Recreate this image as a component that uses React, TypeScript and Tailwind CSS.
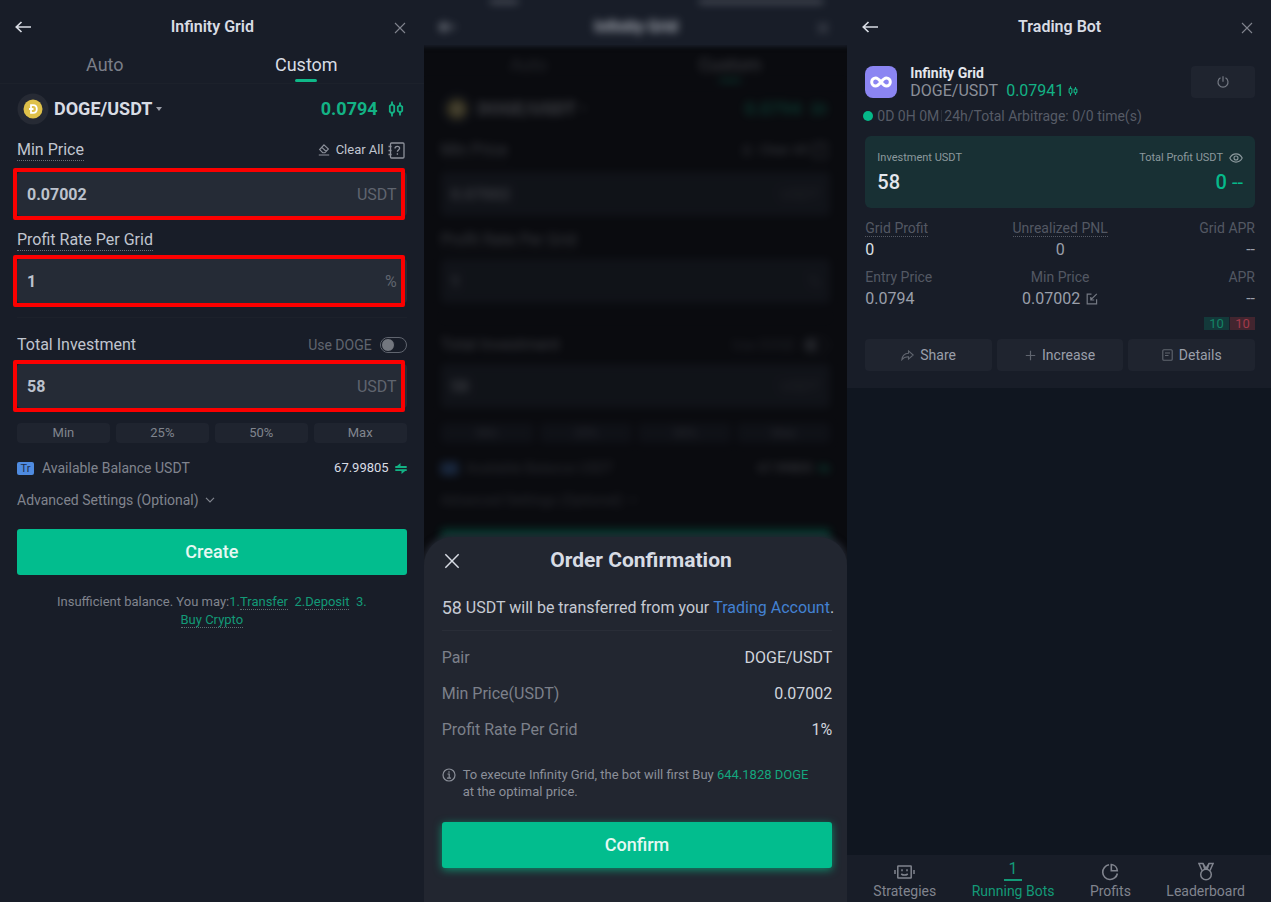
import React, { useId } from 'react';

type IconProps = { className?: string };

const BackIcon = ({ className }: IconProps) => (
  <svg className={className} viewBox="0 0 16 12" fill="none" stroke="currentColor" strokeWidth="1.7">
    <path d="M6.5 1 1.3 6l5.2 5M1.5 6H16" />
  </svg>
);

const CloseIcon = ({ className }: IconProps) => (
  <svg className={className} viewBox="0 0 12 12" fill="none" stroke="currentColor" strokeWidth="1.1">
    <path d="M1 1l10 10M11 1 1 11" />
  </svg>
);

const CandlesIcon = ({ className }: IconProps) => (
  <svg className={className} viewBox="0 0 16 16" fill="none" stroke="currentColor" strokeWidth="1.8">
    <path d="M4 .5V4M4 12v3.500M12 1.500V5M12 11v3.500" />
    <path d="M4 3.300 6.200 5v5.500L4 12.500l-2.200-2V5zM12 4.300l2.200 1.500v4L12 11.500 9.800 9.800v-4z" />
  </svg>
);

const DogeIcon = ({ className }: IconProps) => (
  <svg className={className} viewBox="0 0 32 32">
    <circle cx="16" cy="16" r="15.500" fill="#262a34" />
    <circle cx="16" cy="16" r="9.500" fill="#dfc14a" />
    <path
      d="M14 12.200h2.200c2.200 0 3.600 1.500 3.600 3.800s-1.400 3.800-3.600 3.800H14zM12 16h4.500"
      fill="none"
      stroke="#fff"
      strokeWidth="1.800"
    />
  </svg>
);

const EraserIcon = ({ className }: IconProps) => (
  <svg className={className} viewBox="0 0 12 12" fill="none" stroke="currentColor" strokeWidth="1.100">
    <path d="M6 .8 10.400 5 6.900 8.700H4.700L1.600 5.500zM3.600 3.200l4.600 4.300M.8 11h10.400" />
  </svg>
);

const GuideIcon = ({ className }: IconProps) => (
  <svg className={className} viewBox="0 0 17 17" fill="none" stroke="currentColor" strokeWidth="1.300">
    <rect x="2.500" y="1" width="13.500" height="15" rx="1" />
    <path d="M.5 4.500h3M.5 8.500h3M.5 12.500h3" />
    <path d="M7 6.500c0-1.300 1-2.200 2.300-2.200s2.300.8 2.300 2c0 1.600-2.200 1.700-2.200 3.400M9.400 11.300v1.500" />
  </svg>
);

const TransferIcon = ({ className }: IconProps) => (
  <svg className={className} viewBox="0 0 12 11" fill="none" stroke="currentColor" strokeWidth="1.800">
    <path d="M.3 4h11.400M.3 7.200h11.400" />
    <path d="M5.500 0v4.500L.3 4.500zM6.500 11V6.700h5.200z" fill="currentColor" stroke="none" />
  </svg>
);

const ChevronIcon = ({ className }: IconProps) => (
  <svg className={className} viewBox="0 0 10 6" fill="none" stroke="currentColor" strokeWidth="1.200">
    <path d="M1 .8 5 4.800 9 .8" />
  </svg>
);

const InfoIcon = ({ className }: IconProps) => (
  <svg className={className} viewBox="0 0 14 14" fill="none" stroke="currentColor" strokeWidth="1.200">
    <circle cx="7" cy="7" r="6" />
    <path d="M5.500 6H7.200v4M5 10.200h4M7 3.300v1.400" />
  </svg>
);

const InfinityIcon = ({ className }: IconProps) => (
  <svg className={className} viewBox="0 0 22 12" fill="none" stroke="currentColor" strokeWidth="3">
    <path d="M11 6C9 3.500 7.800 2 5.700 2a4 4 0 0 0 0 8C7.800 10 9 8.500 11 6s3.200-4 5.300-4a4 4 0 0 1 0 8C14.200 10 13 8.500 11 6z" />
  </svg>
);

const PowerIcon = ({ className }: IconProps) => (
  <svg className={className} viewBox="0 0 12 12" fill="none" stroke="currentColor" strokeWidth="1.200">
    <path d="M3.500 1.800a5 5 0 1 0 5 0M6 .3v5.500" />
  </svg>
);

const EyeIcon = ({ className }: IconProps) => (
  <svg className={className} viewBox="0 0 14 10" fill="none" stroke="currentColor" strokeWidth="1.100">
    <path d="M.8 5C2.200 2.300 4.300.9 7 .9S11.800 2.300 13.200 5C11.800 7.700 9.700 9.100 7 9.100S2.200 7.700.8 5z" />
    <circle cx="7" cy="5" r="2" />
  </svg>
);

const EditIcon = ({ className }: IconProps) => (
  <svg className={className} viewBox="0 0 12 12" fill="none" stroke="currentColor" strokeWidth="1.200">
    <path d="M5.500 1.200H1.200v9.600h9.400V6.300M10.800.8 5 6.600M4.800 4v3h3.400" />
  </svg>
);

const ShareIcon = ({ className }: IconProps) => (
  <svg className={className} viewBox="0 0 13 11" fill="none" stroke="currentColor" strokeWidth="1.100">
    <path d="M7.500.9 12.200 5 7.500 9.100V6.700C4.500 6.600 2.500 7.500.9 9.600 1.200 6.300 3.500 3.600 7.500 3.300z" />
  </svg>
);

const PlusIcon = ({ className }: IconProps) => (
  <svg className={className} viewBox="0 0 11 11" fill="none" stroke="currentColor" strokeWidth="1.200">
    <path d="M5.500.8v9.400M.8 5.500h9.400" />
  </svg>
);

const DetailsIcon = ({ className }: IconProps) => (
  <svg className={className} viewBox="0 0 11 12" fill="none" stroke="currentColor" strokeWidth="1.100">
    <rect x=".8" y=".8" width="9.400" height="10.400" rx="1" />
    <path d="M3 4h5M3 6.500h3.500" />
  </svg>
);

const RobotIcon = ({ className }: IconProps) => (
  <svg className={className} viewBox="0 0 21 14" fill="none" stroke="currentColor" strokeWidth="1.500">
    <rect x="3.800" y="1" width="13.400" height="12" rx=".5" />
    <path d="M1 5v4M20 5v4M8 4.300v2M13 4.300v2M7.200 9c2 1.300 4.600 1.300 6.600 0" />
  </svg>
);

const PieIcon = ({ className }: IconProps) => (
  <svg className={className} viewBox="0 0 18 18" fill="none" stroke="currentColor" strokeWidth="1.600">
    <path d="M8 1.800a7.400 7.400 0 1 0 8.400 8.700" />
    <path d="M10.300 1.500a6.500 6.500 0 0 1 6 6.200h-6z" />
  </svg>
);

const MedalIcon = ({ className }: IconProps) => (
  <svg className={className} viewBox="0 0 16 19" fill="none" stroke="currentColor" strokeWidth="1.500">
    <circle cx="8" cy="12.500" r="5.300" />
    <path d="M4 8.500.9 1.500h4L8 6.500l3.100-5h4l-3.100 7M5 1.500l1.800 5.500M11 1.500 9.200 7" />
  </svg>
);

const PanelHeader = ({ title }: { title: string }) => (
  <header className="flex h-[45px] items-center justify-between pt-2 pr-[18px] pl-[15px]">
    <button type="button" aria-label="Back" className="text-[#d8dce4]">
      <BackIcon className="h-3 w-4" />
    </button>
    <h1 className="text-base font-semibold text-[#d8dce4]">{title}</h1>
    <button type="button" aria-label="Close" className="pt-0.5 text-[#80848e]">
      <CloseIcon className="h-3 w-3" />
    </button>
  </header>
);

type FieldProps = {
  id: string;
  value: string;
  unit: string;
  highlighted: boolean;
};

const Field = ({ id, value, unit, highlighted }: FieldProps) => (
  <div className="relative flex h-11 items-center rounded bg-[#252b36] px-2.5 pt-0.5">
    <input
      id={id}
      type="text"
      defaultValue={value}
      className="min-w-0 flex-1 bg-transparent text-base font-bold text-[#bcc2cd] outline-none"
    />
    <span className="text-base text-[#60656f]">{unit}</span>
    {highlighted && (
      <span className="pointer-events-none absolute -inset-y-1 -left-1 right-0.5 rounded-xs border-4 border-[#fb0000]" />
    )}
  </div>
);

type GridFormProps = {
  highlighted?: boolean;
  covered?: boolean;
};

const GridForm = ({ highlighted = false, covered = false }: GridFormProps) => {
  const id = useId();

  return (
    <form onSubmit={(e) => e.preventDefault()}>
      <div className="flex h-[39px] items-end justify-between border-b border-[#1c212b] px-[86px] text-lg leading-7">
        <button type="button" className="pb-1 text-[#7b7f89]">
          Auto
        </button>
        <button type="button" className="flex flex-col items-center text-[#d8dce4]">
          Custom
          <span className="mb-px h-[3px] w-[22px] rounded bg-[#0fb888]" />
        </button>
      </div>

      <div className="px-[17px]">
        <div className="flex h-[50px] items-center justify-between">
          <button type="button" className="flex items-center text-lg font-bold text-[#d8dce4]">
            <DogeIcon className="mr-[5px] h-8 w-8" />
            DOGE/USDT
            <svg className="ml-1 h-1 w-1.5" viewBox="0 0 6 4" fill="#9a9ea8">
              <path d="M0 0h6L3 4z" />
            </svg>
          </button>
          <div className="flex items-center gap-2.5 pr-[3px] text-lg font-bold text-[#13b285]">
            0.0794
            <CandlesIcon className="h-4 w-4" />
          </div>
        </div>

        <div className="mb-1.5 flex h-8 items-center justify-between">
          <label htmlFor={`${id}-min`} className="border-b border-dotted border-[#6b6f79] text-base leading-5 text-[#c0c5cf]">
            Min Price
          </label>
          <div className="flex items-center gap-1 pr-0.5 text-[#8d919b]">
            <button type="button" className="flex items-center gap-1.5 text-[13px] text-[#c0c5cf]">
              <EraserIcon className="h-3 w-3 text-[#8d919b]" />
              Clear All
            </button>
            <GuideIcon className="h-[17px] w-[17px]" />
          </div>
        </div>
        <Field id={`${id}-min`} value="0.07002" unit="USDT" highlighted={highlighted} />

        <div className="mt-2 mb-[3px] flex h-8 items-center">
          <label htmlFor={`${id}-rate`} className="border-b border-dotted border-[#6b6f79] text-base leading-5 text-[#c0c5cf]">
            Profit Rate Per Grid
          </label>
        </div>
        <Field id={`${id}-rate`} value="1" unit="%" highlighted={highlighted} />

        <hr className="mt-3.5 border-[#1c212b]" />

        <div className="mt-[11px] mb-[3px] flex h-8 items-center justify-between">
          <label htmlFor={`${id}-total`} className="text-base text-[#c0c5cf]">
            Total Investment
          </label>
          <label className="flex items-center gap-2 text-sm text-[#60656f]">
            Use DOGE
            <input
              type="checkbox"
              className="h-4 w-[27px] appearance-none rounded-full border border-[#60656f] before:block before:h-3.5 before:w-3.5 before:rounded-full before:border before:border-[#181d28] before:bg-[#73777f]"
            />
          </label>
        </div>
        <Field id={`${id}-total`} value="58" unit="USDT" highlighted={highlighted} />

        <div className="mt-[15px] grid grid-cols-4 gap-1.5">
          {['Min', '25%', '50%', 'Max'].map((amount) => (
            <button key={amount} type="button" className="h-5 rounded bg-[#1f242f] text-[13px] leading-5 text-[#80848e]">
              {amount}
            </button>
          ))}
        </div>

        <div className="mt-[13px] flex h-6 items-center justify-between text-[13px]">
          <div className="flex items-center gap-2 text-sm text-[#80848e]">
            <span className="h-[13px] w-[17px] rounded-xs bg-[#4f8be0] text-center text-[11px] leading-[13px] text-[#1c2b48]">Tr</span>
            Available Balance USDT
          </div>
          <div className="flex items-center gap-1.5 text-[#d8dce4]">
            67.99805
            <TransferIcon className="h-[11px] w-3 text-[#13b285]" />
          </div>
        </div>

        <button type="button" className="mt-2 flex h-6 items-center gap-1.5 text-sm text-[#80848e]">
          Advanced Settings (Optional)
          <ChevronIcon className="h-1.5 w-2.5" />
        </button>

        <button
          type="submit"
          aria-label="Create"
          className="mt-[17px] h-[46px] w-full rounded-[3px] bg-[#02bd8e] text-lg font-medium text-[#e6f8f3]"
        >
          {!covered && 'Create'}
        </button>

        {!covered && (
          <p className="mt-[18px] text-center text-[13px] leading-[18px] text-[#80848e]">
            Insufficient balance. You may:
            <span className="text-[#139a77]">
              1.<a href="#transfer" className="border-b border-dotted border-[#5d6e70]">Transfer</a>
              &nbsp; 2.<a href="#deposit" className="border-b border-dotted border-[#5d6e70]">Deposit</a>
              &nbsp; 3.
              <br />
              <a href="#buy" className="border-b border-dotted border-[#5d6e70]">Buy Crypto</a>
            </span>
          </p>
        )}
      </div>
    </form>
  );
};

const orderRows = [
  { label: 'Pair', value: 'DOGE/USDT' },
  { label: 'Min Price(USDT)', value: '0.07002' },
  { label: 'Profit Rate Per Grid', value: '1%' },
];

const OrderConfirmation = () => (
  <div
    role="dialog"
    aria-label="Order Confirmation"
    className="absolute inset-x-0 bottom-0 rounded-t-[28px] bg-[#222630] pr-[15px] pb-[34px] pl-[18px] shadow-[0_0_6px_2px_#222630]"
  >
    <div className="flex h-12 items-center">
      <button type="button" aria-label="Close" className="w-5 text-[#d8dce4]">
        <CloseIcon className="ml-0.5 h-4 w-4" />
      </button>
      <h2 className="flex-1 pr-3 text-center text-[21px] font-bold text-[#d8dce4]">Order Confirmation</h2>
    </div>
    <p className="flex h-[46px] items-center border-b border-[#292d37] text-base whitespace-pre text-[#c6cad3]">
      <span className="text-lg">58</span> USDT will be transferred from your <a href="#account" className="text-[#4381d2]">Trading Account</a>.
    </p>
    <dl className="pt-[9px] text-base">
      {orderRows.map((row) => (
        <div key={row.label} className="flex h-9 items-center justify-between">
          <dt className="text-[#7c808a]">{row.label}</dt>
          <dd className="text-[#d0d4dc]">{row.value}</dd>
        </div>
      ))}
    </dl>
    <div className="mt-[18px] flex gap-[7px] text-[13px] leading-[17px] text-[#8b8f99]">
      <InfoIcon className="mt-0.5 h-3.5 w-3.5 shrink-0" />
      <p>
        To execute Infinity Grid, the bot will first Buy <span className="text-[#14a67e]">644.1828 DOGE</span>
        <br />
        at the optimal price.
      </p>
    </div>
    <button
      type="button"
      className="mt-[22px] h-[46px] w-full rounded-[3px] bg-[#02bd8e] text-lg font-medium text-[#e6f8f3] shadow-[0_2px_8px_#118b6c]"
    >
      Confirm
    </button>
  </div>
);

type StatProps = {
  label: string;
  dotted?: boolean;
  children: React.ReactNode;
};

const Stat = ({ label, dotted, children }: StatProps) => (
  <div>
    <dt className="h-5 text-sm leading-5 text-[#535863]">
      <span className={dotted ? 'border-b border-dotted border-[#535863]' : ''}>{label}</span>
    </dt>
    <dd className="h-6 text-base leading-6 text-[#9a9faa]">{children}</dd>
  </div>
);

const BotCard = () => (
  <article className="bg-[#181d28] pt-[21px] pr-4 pb-[17px] pl-[18px]">
    <div className="flex h-8 items-center">
      <span className="flex h-8 w-8 items-center justify-center rounded-lg bg-[#8b85f2] text-white">
        <InfinityIcon className="h-3 w-[22px]" />
      </span>
      <div className="ml-[13px] flex-1">
        <h2 className="text-sm leading-[18px] font-bold text-[#e4e7ed]">Infinity Grid</h2>
        <div className="flex items-center gap-2 text-base leading-[18px] text-[#8b8f99]">
          DOGE/USDT
          <span className="flex items-center gap-1 text-[#13b285]">
            0.07941
            <CandlesIcon className="h-2.5 w-2.5" />
          </span>
        </div>
      </div>
      <button type="button" aria-label="Stop bot" className="flex h-8 w-16 items-center justify-center rounded bg-[#1f242f] text-[#747983]">
        <PowerIcon className="h-3 w-3" />
      </button>
    </div>

    <div className="mt-2 flex h-5 items-center text-sm text-[#565b66]">
      <span className="-ml-0.5 mr-1 h-2.5 w-2.5 rounded-full bg-[#05b889]" />
      0D 0H 0M
      <span className="mx-0.5 h-3 w-px bg-[#2b303b]" />
      24h/Total Arbitrage: 0/0 time(s)
    </div>

    <div className="mt-2.5 flex h-[72px] justify-between rounded-md bg-[#183034] px-3 pt-3.5">
      <div>
        <div className="mb-1 text-[11px] leading-4 text-[#8c999d]">Investment USDT</div>
        <div className="text-xl leading-6 font-medium text-[#e4e7ed]">58</div>
      </div>
      <div className="text-right">
        <div className="mb-1 flex items-center gap-1.5 text-[11px] leading-4 text-[#8c999d]">
          Total Profit USDT
          <EyeIcon className="h-2.5 w-3.5" />
        </div>
        <div className="text-xl leading-6 font-medium text-[#06b98a]">
          0 <span className="font-normal">--</span>
        </div>
      </div>
    </div>

    <dl className="mt-2.5 grid grid-cols-3 gap-y-[5px]">
      <Stat label="Grid Profit" dotted>
        <span className="text-[#dde0e6]">0</span>
      </Stat>
      <div className="text-center">
        <Stat label="Unrealized PNL" dotted>0</Stat>
      </div>
      <div className="text-right">
        <Stat label="Grid APR">--</Stat>
      </div>
      <Stat label="Entry Price">0.0794</Stat>
      <div className="text-center">
        <Stat label="Min Price">
          <span className="inline-flex items-center gap-1.5">
            0.07002
            <EditIcon className="h-3 w-3 text-[#747983]" />
          </span>
        </Stat>
      </div>
      <div className="text-right">
        <Stat label="APR">--</Stat>
      </div>
    </dl>

    <div className="mt-1.5 flex h-[13px] justify-end gap-px text-center text-[13px] leading-[13px]">
      <span className="w-[25px] bg-[#13393a] text-[#138465]">10</span>
      <span className="w-[25px] bg-[#42252f] text-[#a3394a]">10</span>
    </div>

    <div className="mt-[9px] grid grid-cols-3 gap-[5px] text-sm text-[#9a9faa]">
      <button type="button" className="flex h-8 items-center justify-center gap-1.5 rounded bg-[#1f242f]">
        <ShareIcon className="h-[11px] w-[13px] text-[#60656f]" />
        Share
      </button>
      <button type="button" className="flex h-8 items-center justify-center gap-1.5 rounded bg-[#1f242f]">
        <PlusIcon className="h-[11px] w-[11px] text-[#60656f]" />
        Increase
      </button>
      <button type="button" className="flex h-8 items-center justify-center gap-1.5 rounded bg-[#1f242f]">
        <DetailsIcon className="h-3 w-[11px] text-[#60656f]" />
        Details
      </button>
    </div>
  </article>
);

const BottomNav = () => (
  <nav className="mt-auto flex h-[47px] justify-between bg-[#181d28] px-[26px] text-sm text-[#80848e]">
    <a href="#strategies" className="flex flex-col items-center">
      <span className="flex h-[26px] items-end pb-0.5">
        <RobotIcon className="h-3.5 w-[21px]" />
      </span>
      Strategies
    </a>
    <a href="#running" className="flex flex-col items-center text-[#139a77]">
      <span className="flex h-[26px] w-[18px] flex-col items-center justify-end">
        <span className="text-base leading-5">1</span>
        <span className="h-0.5 w-full bg-[#139a77]" />
      </span>
      Running Bots
    </a>
    <a href="#profits" className="flex flex-col items-center">
      <span className="flex h-[26px] items-end">
        <PieIcon className="h-[18px] w-[18px]" />
      </span>
      Profits
    </a>
    <a href="#leaderboard" className="flex flex-col items-center">
      <span className="flex h-[26px] items-end">
        <MedalIcon className="h-[19px] w-4" />
      </span>
      Leaderboard
    </a>
  </nav>
);

const App: React.FC = () => (
  <main className="grid min-h-screen grid-cols-3 bg-[#101620] font-['Roboto',sans-serif]">
    <section className="bg-[#181d28]">
      <PanelHeader title="Infinity Grid" />
      <GridForm highlighted />
    </section>

    <section className="relative overflow-hidden bg-[#0a0b0f]">
      <div inert className="h-full">
        <div className="bg-[#181d28] shadow-[0_0_4px_2px_#181d28]">
          <div className="opacity-80 blur-[4px]">
            {/* bottom edge of the phone's status bar */}
            <div className="absolute inset-x-0 top-0 flex justify-between pr-6 pl-[66px]">
              <span className="h-[3px] w-7 bg-[#80848e]" />
              <span className="h-[3px] w-[124px] bg-[#80848e]" />
            </div>
            <PanelHeader title="Infinity Grid" />
          </div>
        </div>
        <div className="opacity-25 blur-[4px]">
          <GridForm covered />
        </div>
      </div>
      <OrderConfirmation />
    </section>

    <section className="flex flex-col">
      <div className="bg-[#181d28]">
        <PanelHeader title="Trading Bot" />
      </div>
      <BotCard />
      <BottomNav />
    </section>
  </main>
);

export default App;
